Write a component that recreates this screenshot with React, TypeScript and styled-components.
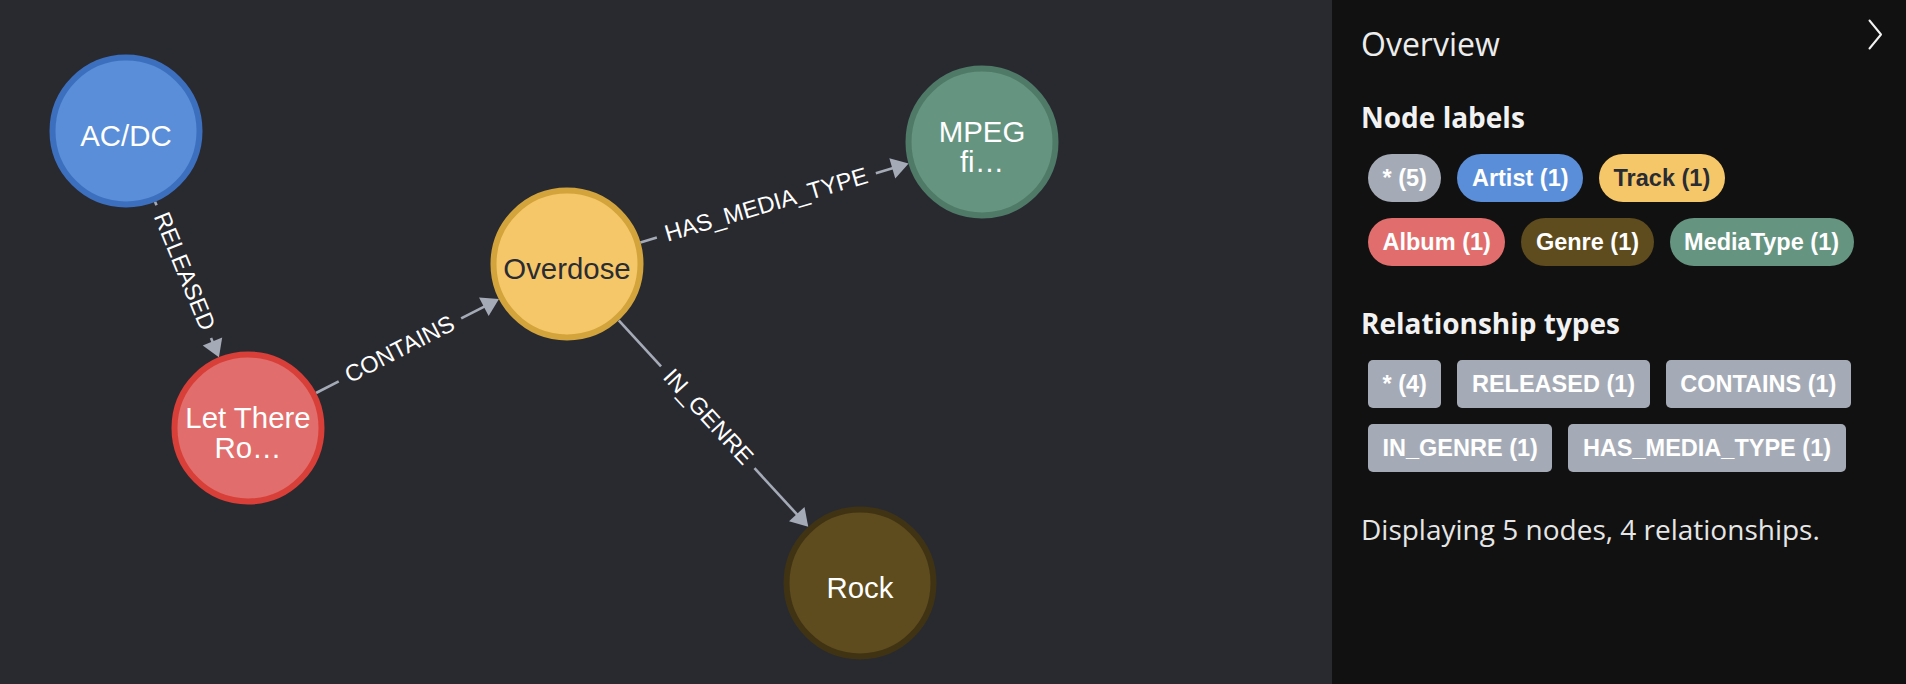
import React from "react";
import styled, { createGlobalStyle } from "styled-components";

const GlobalStyle = createGlobalStyle`
  html, body {
    margin: 0;
    padding: 0;
    background: #292a30;
  }
  #root {
    height: 100vh;
  }
`;

const Layout = styled.div`
  display: flex;
  width: 100%;
  height: 100vh;
  overflow: hidden;
`;

/* graph canvas */
const GraphArea = styled.div`
  flex: 1;
  min-width: 0;
  background: #292a30;
`;

const GraphSvg = styled.svg`
  display: block;
  width: 100%;
  height: 100%;
`;

const NodeCircle = styled.circle<{ $fill: string; $stroke: string }>`
  fill: ${(p) => p.$fill};
  stroke: ${(p) => p.$stroke};
  stroke-width: 6px;
`;

const NodeCaption = styled.text<{ $color: string }>`
  font-family: "Liberation Sans", Arial, sans-serif;
  font-size: 29.4px;
  fill: ${(p) => p.$color};
  text-anchor: middle;
`;

const RelLine = styled.line`
  stroke: #a5abb6;
  stroke-width: 2.6px;
`;

const RelHead = styled.polygon`
  fill: #a5abb6;
`;

const RelCaption = styled.text`
  font-family: "Liberation Sans", Arial, sans-serif;
  font-size: 23.5px;
  fill: #ffffff;
  text-anchor: middle;
`;

/* overview drawer */
const Panel = styled.aside`
  width: 574px;
  flex-shrink: 0;
  box-sizing: border-box;
  background: #111111;
  padding: 22px 27px 0 29px;
  font-family: "Open Sans", "Liberation Sans", sans-serif;
  color: #f0f0f0;
`;

const PanelHeader = styled.div`
  display: flex;
  justify-content: space-between;
  align-items: flex-start;
`;

const Title = styled.h1`
  margin: 0;
  font-size: 32px;
  line-height: 43px;
  font-weight: 400;
  color: #ececec;
`;

const CollapseButton = styled.button`
  display: flex;
  border: none;
  background: none;
  padding: 0;
  margin: -3px -4px 0 0;
  cursor: pointer;
`;

const SectionTitle = styled.h2<{ $top: number }>`
  margin: ${(p) => p.$top}px 0 0 0;
  font-size: 28px;
  line-height: 38px;
  font-weight: 700;
  color: #f2f2f2;
`;

const PillList = styled.div`
  display: flex;
  flex-wrap: wrap;
  max-width: 510px;
  margin: 10px 0 0 -1px;
`;

const Pill = styled.span<{ $bg: string; $fg: string; $round: boolean }>`
  display: inline-flex;
  align-items: center;
  height: 48px;
  margin: 8px;
  padding: 0 14.5px;
  box-sizing: border-box;
  border-radius: ${(p) => (p.$round ? "24px" : "5px")};
  background: ${(p) => p.$bg};
  color: ${(p) => p.$fg};
  font-family: "Liberation Sans", Arial, sans-serif;
  font-weight: 700;
  font-size: 23.5px;
  white-space: nowrap;
`;

const Summary = styled.p`
  margin: 30px 0 0 0;
  font-size: 28px;
  line-height: 38px;
  font-weight: 400;
  color: #e6e6e6;
`;

type GraphNode = {
  id: string;
  x: number;
  y: number;
  lines: string[];
  fill: string;
  stroke: string;
  text: string;
};

type GraphRel = { from: string; to: string; type: string };

const NODES: GraphNode[] = [
  { id: "artist", x: 126, y: 131, lines: ["AC/DC"], fill: "#5a8ed8", stroke: "#3d6fbf", text: "#ffffff" },
  { id: "album", x: 248, y: 428, lines: ["Let There", "Ro…"], fill: "#e16e6c", stroke: "#d83f38", text: "#ffffff" },
  { id: "track", x: 567, y: 264, lines: ["Overdose"], fill: "#f6c768", stroke: "#d3a43c", text: "#2a2c34" },
  { id: "media", x: 982, y: 142, lines: ["MPEG", "fi…"], fill: "#659481", stroke: "#4f7a68", text: "#ffffff" },
  { id: "genre", x: 860, y: 583, lines: ["Rock"], fill: "#5e4b1e", stroke: "#3f3313", text: "#ffffff" },
];

const RELS: GraphRel[] = [
  { from: "artist", to: "album", type: "RELEASED" },
  { from: "album", to: "track", type: "CONTAINS" },
  { from: "track", to: "media", type: "HAS_MEDIA_TYPE" },
  { from: "track", to: "genre", type: "IN_GENRE" },
];

const NODE_LABELS = [
  { name: "*", count: 5, bg: "#a5abb6", fg: "#ffffff" },
  { name: "Artist", count: 1, bg: "#5a8ed8", fg: "#ffffff" },
  { name: "Track", count: 1, bg: "#f6c768", fg: "#2a2c34" },
  { name: "Album", count: 1, bg: "#e16e6c", fg: "#ffffff" },
  { name: "Genre", count: 1, bg: "#5e4b1e", fg: "#ffffff" },
  { name: "MediaType", count: 1, bg: "#659481", fg: "#ffffff" },
];

const REL_TYPES = [
  { name: "*", count: 4 },
  { name: "RELEASED", count: 1 },
  { name: "CONTAINS", count: 1 },
  { name: "IN_GENRE", count: 1 },
  { name: "HAS_MEDIA_TYPE", count: 1 },
];

const RADIUS = 76.5;
const HEAD_LEN = 17;
const HEAD_HALF = 10.5;
const LABEL_PAD = 9;

let measureCtx: CanvasRenderingContext2D | null = null;
function labelWidth(text: string) {
  if (!measureCtx) {
    measureCtx = document.createElement("canvas").getContext("2d");
  }
  if (!measureCtx) return text.length * 15;
  measureCtx.font = '23.5px "Liberation Sans"';
  return measureCtx.measureText(text).width;
}

function Relationship({ rel }: { rel: GraphRel }) {
  const a = NODES.find((n) => n.id === rel.from)!;
  const b = NODES.find((n) => n.id === rel.to)!;
  const dx = b.x - a.x;
  const dy = b.y - a.y;
  const len = Math.hypot(dx, dy);
  const ux = dx / len;
  const uy = dy / len;
  const angle = (Math.atan2(dy, dx) * 180) / Math.PI;
  const sx = a.x + ux * RADIUS;
  const sy = a.y + uy * RADIUS;
  const shaft = len - 2 * RADIUS - HEAD_LEN;
  const gap = labelWidth(rel.type) + LABEL_PAD * 2;
  const seg = Math.max(0, (shaft - gap) / 2);

  return (
    <g transform={`translate(${sx} ${sy}) rotate(${angle})`}>
      {seg > 0 && <RelLine x1={0} y1={0} x2={seg} y2={0} />}
      {seg > 0 && <RelLine x1={shaft - seg} y1={0} x2={shaft + 1} y2={0} />}
      <RelHead points={`${shaft},${-HEAD_HALF} ${shaft + HEAD_LEN},0 ${shaft},${HEAD_HALF}`} />
      <RelCaption x={shaft / 2} y={7}>
        {rel.type}
      </RelCaption>
    </g>
  );
}

function Node({ node }: { node: GraphNode }) {
  const single = node.lines.length === 1;
  return (
    <g>
      <NodeCircle cx={node.x} cy={node.y} r={73.5} $fill={node.fill} $stroke={node.stroke} />
      {node.lines.map((line, i) => (
        <NodeCaption
          key={line}
          x={node.x}
          y={single ? node.y + 14.5 : node.y - 0.5 + i * 30}
          $color={node.text}
        >
          {line}
        </NodeCaption>
      ))}
    </g>
  );
}

function App() {
  return (
    <>
      <GlobalStyle />
      <Layout>
        <GraphArea>
          <GraphSvg>
            {RELS.map((r) => (
              <Relationship key={r.type} rel={r} />
            ))}
            {NODES.map((n) => (
              <Node key={n.id} node={n} />
            ))}
          </GraphSvg>
        </GraphArea>
        <Panel>
          <PanelHeader>
            <Title>Overview</Title>
            <CollapseButton aria-label="Collapse">
              <svg width="15" height="31" viewBox="0 0 15 31">
                <polyline
                  points="1.5,1.5 13,15.5 1.5,29.5"
                  fill="none"
                  stroke="#f2f2f2"
                  strokeWidth="2"
                  strokeLinecap="round"
                  strokeLinejoin="round"
                />
              </svg>
            </CollapseButton>
          </PanelHeader>

          <SectionTitle $top={33}>Node labels</SectionTitle>
          <PillList>
            {NODE_LABELS.map((l) => (
              <Pill key={l.name} $bg={l.bg} $fg={l.fg} $round>
                {l.name} ({l.count})
              </Pill>
            ))}
          </PillList>

          <SectionTitle $top={30}>Relationship types</SectionTitle>
          <PillList>
            {REL_TYPES.map((t) => (
              <Pill key={t.name} $bg="#a5abb6" $fg="#ffffff" $round={false}>
                {t.name} ({t.count})
              </Pill>
            ))}
          </PillList>

          <Summary>Displaying 5 nodes, 4 relationships.</Summary>
        </Panel>
      </Layout>
    </>
  );
}

export default App;
